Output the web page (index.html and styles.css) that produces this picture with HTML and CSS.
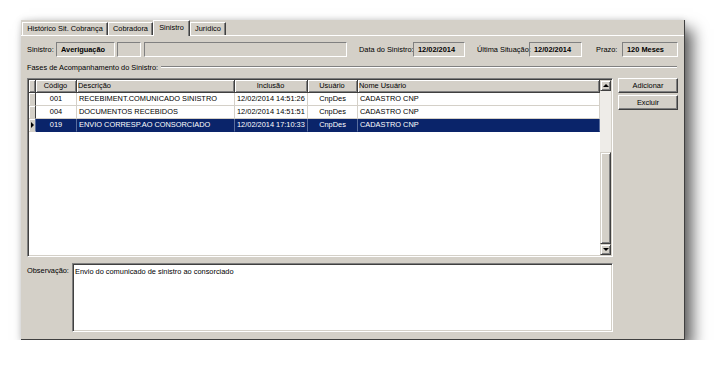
FILE: index.html
```html
<!DOCTYPE html>
<html lang="pt-BR">
<head>
    <meta charset="UTF-8">
    <title>Sinistro</title>
    <link rel="stylesheet" href="styles.css">
</head>
<body>
    <div class="janela">
        <div class="abas">
            <div class="aba" style="width:86px">Histórico Sit. Cobrança</div>
            <div class="aba" style="width:45px">Cobradora</div>
            <div class="aba ativa" style="width:37px">Sinistro</div>
            <div class="aba" style="width:36px">Jurídico</div>
        </div>

        <div class="pagina">
            <div class="linha-campos">
                <span class="rotulo" style="width:29px">Sinistro:</span>
                <div class="caixa" style="width:59px">Averiguação</div>
                <div class="caixa" style="width:24px; margin-left:2px"></div>
                <div class="caixa" style="width:203px; margin-left:3px"></div>
                <span class="rotulo" style="width:54px; margin-left:12px">Data do Sinistro:</span>
                <div class="caixa" style="width:52px">12/02/2014</div>
                <span class="rotulo" style="width:52px; margin-left:12px">Última Situação:</span>
                <div class="caixa" style="width:53px">12/02/2014</div>
                <span class="rotulo" style="width:26px; margin-left:14px">Prazo:</span>
                <div class="caixa" style="width:56px">120 Meses</div>
            </div>

            <div class="grupo">
                <span>Fases de Acompanhamento do Sinistro:</span>
                <div class="sulco"></div>
            </div>

            <div class="linha-grade">
                <div class="grade">
                    <div class="grade-corpo">
                        <div class="cab">
                            <div class="celula"></div>
                            <div class="celula centro">Código</div>
                            <div class="celula">Descrição</div>
                            <div class="celula centro">Inclusão</div>
                            <div class="celula centro">Usuário</div>
                            <div class="celula">Nome Usuário</div>
                        </div>
                        <div class="registro">
                            <div class="celula ind"></div>
                            <div class="celula centro">001</div>
                            <div class="celula">RECEBIMENT.COMUNICADO SINISTRO</div>
                            <div class="celula">12/02/2014 14:51:26</div>
                            <div class="celula centro">CnpDes</div>
                            <div class="celula">CADASTRO CNP</div>
                        </div>
                        <div class="registro">
                            <div class="celula ind"></div>
                            <div class="celula centro">004</div>
                            <div class="celula">DOCUMENTOS RECEBIDOS</div>
                            <div class="celula">12/02/2014 14:51:51</div>
                            <div class="celula centro">CnpDes</div>
                            <div class="celula">CADASTRO CNP</div>
                        </div>
                        <div class="registro selecionado">
                            <div class="celula ind"><span class="seta"></span></div>
                            <div class="celula centro">019</div>
                            <div class="celula">ENVIO CORRESP.AO CONSORCIADO</div>
                            <div class="celula">12/02/2014 17:10:33</div>
                            <div class="celula centro">CnpDes</div>
                            <div class="celula">CADASTRO CNP</div>
                        </div>
                    </div>
                    <div class="rolagem">
                        <div class="botao-rolagem"><span class="tri-cima"></span></div>
                        <div class="trilho"></div>
                        <div class="polegar"></div>
                        <div class="botao-rolagem"><span class="tri-baixo"></span></div>
                    </div>
                </div>
                <div class="acoes">
                    <button class="botao">Adicionar</button>
                    <button class="botao">Excluir</button>
                </div>
            </div>

            <div class="linha-obs">
                <span class="rotulo" style="width:45px">Observação:</span>
                <div class="obs">Envio do comunicado de sinistro ao consorciado</div>
            </div>
        </div>
    </div>
</body>
</html>
```

FILE: styles.css
```css
body {
    margin: 0;
    background-color: #fff;
    font-family: "Liberation Sans", Arial, sans-serif;
    font-size: 7.4px;
    color: #000;
}
.janela {
    width: 664px;
    height: 320px;
    margin: 20px 0 0 21px;
    background-color: #d4d0c8;
    border-right: 1px solid #404040;
    border-bottom: 1px solid #404040;
    box-sizing: border-box;
    box-shadow: 8px 9px 14px rgba(0, 0, 0, 0.6), 0 0 6px rgba(0, 0, 0, 0.15);
}
.abas {
    display: flex;
    align-items: flex-end;
    height: 15px;
    padding-left: 1px;
}
.aba {
    height: 13px;
    line-height: 12px;
    text-align: center;
    border-top: 1px solid #fff;
    border-left: 1px solid #fff;
    border-right: 1px solid #404040;
    box-shadow: inset -1px 0 #808080;
    box-sizing: border-box;
    white-space: nowrap;
}
.aba.ativa {
    height: 16px;
    line-height: 14px;
    margin-bottom: -1px;
    background-color: #d4d0c8;
    position: relative;
}
.pagina {
    border-top: 1px solid #fff;
    padding: 6px 7px 7px 6px;
}
.linha-campos {
    display: flex;
    align-items: center;
    height: 15px;
}
.rotulo {
    flex: none;
    white-space: nowrap;
}
.caixa {
    flex: none;
    height: 15px;
    line-height: 13px;
    padding-left: 4px;
    font-weight: bold;
    border: 1px solid;
    border-color: #808080 #fff #fff #808080;
    box-sizing: border-box;
    white-space: nowrap;
}
.grupo {
    display: flex;
    align-items: center;
    height: 10px;
    margin-top: 5px;
}
.sulco {
    flex: 1;
    margin-left: 3px;
    border-top: 1px solid #808080;
    border-bottom: 1px solid #fff;
}
.linha-grade {
    display: flex;
    margin-top: 6px;
    height: 179px;
}
.grade {
    display: flex;
    width: 586px;
    height: 179px;
    background-color: #fff;
    border: 1px solid;
    border-color: #808080 #fff #fff #808080;
    box-shadow: inset 1px 1px #404040, inset -1px -1px #d4d0c8;
    padding: 1px;
    box-sizing: border-box;
}
.grade-corpo {
    width: 571px;
}
.cab,
.registro {
    display: grid;
    grid-template-columns: 7px 41px 158px 73px 50px 242px;
    height: 13px;
}
.celula {
    line-height: 12px;
    padding: 0 2px;
    white-space: nowrap;
    overflow: hidden;
    box-sizing: border-box;
    border-right: 1px solid #d4d0c8;
    border-bottom: 1px solid #d4d0c8;
}
.centro {
    text-align: center;
}
.cab .celula {
    background-color: #d4d0c8;
    border-right: 1px solid #404040;
    border-bottom: 1px solid #404040;
    box-shadow: inset 1px 1px #fff, inset -1px -1px #808080;
    padding-left: 1px;
}
.registro .ind {
    background-color: #d4d0c8;
    border-right: 1px solid #404040;
    box-shadow: inset 1px 1px #fff;
    position: relative;
}
.selecionado {
    background-color: #0a246a;
    color: #fff;
}
.selecionado .celula {
    border-right-color: #5a6e9e;
    border-bottom-color: #0a246a;
}
.selecionado .ind {
    border-bottom-color: #d4d0c8;
}
.seta {
    position: absolute;
    left: 2px;
    top: 3px;
    border-left: 3px solid #000;
    border-top: 3px solid transparent;
    border-bottom: 3px solid transparent;
}
.rolagem {
    display: flex;
    flex-direction: column;
    width: 11px;
}
.botao-rolagem,
.polegar {
    background-color: #d4d0c8;
    border: 1px solid;
    border-color: #d4d0c8 #404040 #404040 #d4d0c8;
    box-shadow: inset 1px 1px #fff, inset -1px -1px #808080;
    box-sizing: border-box;
}
.botao-rolagem {
    height: 11px;
    display: flex;
    align-items: center;
    justify-content: center;
}
.trilho {
    height: 61px;
    background-color: #eeece8;
}
.polegar {
    flex: 1;
}
.tri-cima {
    border-bottom: 3px solid #000;
    border-left: 3px solid transparent;
    border-right: 3px solid transparent;
}
.tri-baixo {
    border-top: 3px solid #000;
    border-left: 3px solid transparent;
    border-right: 3px solid transparent;
}
.acoes {
    display: flex;
    flex-direction: column;
    gap: 2px;
    margin-left: 5px;
}
.botao {
    width: 60px;
    height: 15px;
    padding: 0;
    font-family: inherit;
    font-size: 7.4px;
    color: #000;
    background-color: #d4d0c8;
    border: 1px solid;
    border-color: #fff #404040 #404040 #fff;
    box-shadow: inset -1px -1px #808080;
    cursor: pointer;
}
.linha-obs {
    display: flex;
    margin-top: 6px;
    height: 69px;
}
.linha-obs .rotulo {
    padding-top: 3px;
}
.obs {
    width: 541px;
    height: 69px;
    background-color: #fff;
    padding: 3px 2px;
    border: 1px solid;
    border-color: #808080 #fff #fff #808080;
    box-shadow: inset 1px 1px #404040, inset -1px -1px #d4d0c8;
    box-sizing: border-box;
}
```
